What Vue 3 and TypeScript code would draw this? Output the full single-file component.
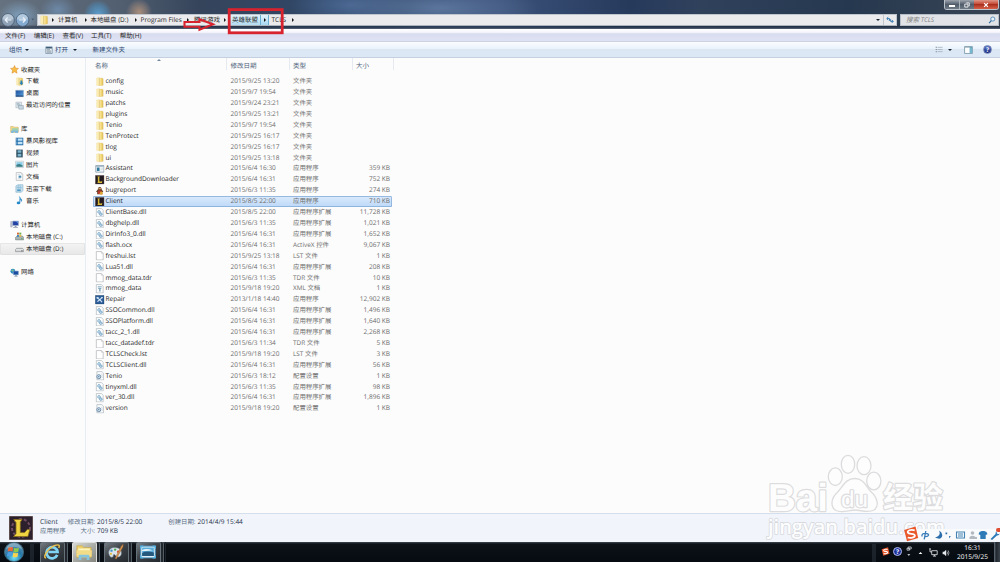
<script setup lang="ts">
interface FileRow { name: string; date: string; type: string; size: string; icon: string }
interface NavItem { label: string; icon: string; level: number; gap?: boolean; active?: boolean }

const APP = '应用程序'
const DLL = '应用程序扩展'
const DIR = '文件夹'
const CFG = '配置设置'

const raw: [string, string, string, string, string][] = [
  ['config', '2015/9/25 13:20', DIR, '', 'folder'],
  ['music', '2015/9/7 19:54', DIR, '', 'folder'],
  ['patchs', '2015/9/24 23:21', DIR, '', 'folder'],
  ['plugins', '2015/9/25 13:21', DIR, '', 'folder'],
  ['Tenio', '2015/9/7 19:54', DIR, '', 'folder'],
  ['TenProtect', '2015/9/25 16:17', DIR, '', 'folder'],
  ['tlog', '2015/9/25 16:17', DIR, '', 'folder'],
  ['ui', '2015/9/25 13:18', DIR, '', 'folder'],
  ['Assistant', '2015/6/4 16:30', APP, '359 KB', 'window'],
  ['BackgroundDownloader', '2015/6/4 16:31', APP, '752 KB', 'league'],
  ['bugreport', '2015/6/3 11:35', APP, '274 KB', 'bug'],
  ['Client', '2015/8/5 22:00', APP, '710 KB', 'league'],
  ['ClientBase.dll', '2015/8/5 22:00', DLL, '11,728 KB', 'dll'],
  ['dbghelp.dll', '2015/6/3 11:35', DLL, '1,021 KB', 'dll'],
  ['DirInfo3_0.dll', '2015/6/4 16:31', DLL, '1,652 KB', 'dll'],
  ['flash.ocx', '2015/6/4 16:31', 'ActiveX 控件', '9,067 KB', 'dll'],
  ['freshui.lst', '2015/9/25 13:18', 'LST 文件', '1 KB', 'page'],
  ['Lua51.dll', '2015/6/4 16:31', DLL, '208 KB', 'dll'],
  ['mmog_data.tdr', '2015/6/3 11:35', 'TDR 文件', '10 KB', 'page'],
  ['mmog_data', '2015/9/18 19:20', 'XML 文档', '1 KB', 'xml'],
  ['Repair', '2013/1/18 14:40', APP, '12,902 KB', 'repair'],
  ['SSOCommon.dll', '2015/6/4 16:31', DLL, '1,496 KB', 'dll'],
  ['SSOPlatform.dll', '2015/6/4 16:31', DLL, '1,640 KB', 'dll'],
  ['tacc_2_1.dll', '2015/6/4 16:31', DLL, '2,268 KB', 'dll'],
  ['tacc_datadef.tdr', '2015/6/3 11:34', 'TDR 文件', '5 KB', 'page'],
  ['TCLSCheck.lst', '2015/9/18 19:20', 'LST 文件', '3 KB', 'page'],
  ['TCLSClient.dll', '2015/6/4 16:31', DLL, '56 KB', 'dll'],
  ['Tenio', '2015/6/3 18:12', CFG, '1 KB', 'ini'],
  ['tinyxml.dll', '2015/6/3 11:35', DLL, '98 KB', 'dll'],
  ['ver_30.dll', '2015/6/4 16:31', DLL, '1,896 KB', 'dll'],
  ['version', '2015/9/18 19:20', CFG, '1 KB', 'ini'],
]
const files: FileRow[] = raw.map(([name, date, type, size, icon]) => ({ name, date, type, size, icon }))

const nav: NavItem[] = [
  { label: '收藏夹', icon: 'star', level: 0 },
  { label: '下载', icon: 'download', level: 1 },
  { label: '桌面', icon: 'desktop', level: 1 },
  { label: '最近访问的位置', icon: 'recent', level: 1 },
  { label: '库', icon: 'library', level: 0, gap: true },
  { label: '暴风影视库', icon: 'film', level: 1 },
  { label: '视频', icon: 'video', level: 1 },
  { label: '图片', icon: 'picture', level: 1 },
  { label: '文档', icon: 'doc', level: 1 },
  { label: '迅雷下载', icon: 'thunder', level: 1 },
  { label: '音乐', icon: 'music', level: 1 },
  { label: '计算机', icon: 'computer', level: 0, gap: true },
  { label: '本地磁盘 (C:)', icon: 'driveC', level: 1 },
  { label: '本地磁盘 (D:)', icon: 'driveD', level: 1, active: true },
  { label: '网络', icon: 'network', level: 0, gap: true },
]
const selected = 11
</script>

<template>
  <div class="screen">
    <svg class="defs" width="0" height="0">
      <defs>
        <linearGradient id="gFolder" x1="0" x2="1"><stop offset="0" stop-color="#fbeeb0" /><stop offset=".5" stop-color="#f3d979" /><stop offset="1" stop-color="#dfb955" /></linearGradient>
        <linearGradient id="gBlue" x1="0" y1="0" x2="1" y2="1"><stop offset="0" stop-color="#174c9c" /><stop offset="1" stop-color="#5ea4de" /></linearGradient>
        <radialGradient id="gOrb" cx=".5" cy=".8" r=".8"><stop offset="0" stop-color="#6fe0f5" /><stop offset=".5" stop-color="#2477a8" /><stop offset="1" stop-color="#6c93ab" /></radialGradient>
      </defs>
      <symbol id="folder" viewBox="0 0 10 10"><path d="M1.6 1 4.6.6v8.8l-3-.6z" fill="#fbedb5" stroke="#ecd998" stroke-width=".3" /><path d="M4.6 1.1h3.2l.8.9v6.8l-4 .6z" fill="url(#gFolder)" stroke="#dcbf6c" stroke-width=".3" /><path d="M4.6 1.4v7.6" stroke="#d0b056" stroke-width=".4" /></symbol>
      <symbol id="window" viewBox="0 0 10 10"><path d="M.8 1.6h8.6v7H.8z" fill="#f2f7fa" stroke="#8497a6" stroke-width=".8" /><path d="M1 1.7h8.2v1.2H1z" fill="#9bb1c1" /><path d="M2 3.8h2.8v3.6H2z" fill="#327a9c" /><path d="M5.8 4.4h2.6M5.8 6h2.6" stroke="#c5d0d6" stroke-width=".7" /></symbol>
      <symbol id="league" viewBox="0 0 10 10"><path d="M.5.5h9v9h-9z" fill="#211a20" stroke="#594b49" stroke-width=".6" /><path d="M2.3 1.6h3L4.6 2.3v4.2l.8.4h1.200L7.700 6 7.300 8.400H2.200l.8-.8V2.400z" fill="#d8b936" /></symbol>
      <symbol id="bug" viewBox="0 0 10 10"><path d="M3.3 3.2Q3.2 1 5 1t1.8 2.2L8.8 6 7.6 6.2v2.500H2.300V6.200L1 6z" fill="#624127" /><circle cx="5" cy="3" r="1.7" fill="#7c5131" /><path d="M3 4.8h4v3.5H3z" fill="#b4382b" /><circle cx="6.6" cy="7.500" r="1.600" fill="#dda633" /><path d="M3.700 2.700h2.800" stroke="#f0c394" stroke-width=".8" /></symbol>
      <symbol id="page" viewBox="0 0 10 10"><path d="M1.4.6H6.8L8.6 2.4v7H1.4z" fill="#fff" stroke="#a4a7aa" stroke-width=".65" /><path d="M6.8.6v1.8h1.8" fill="#e6e8e9" stroke="#a4a7aa" stroke-width=".4" /></symbol>
      <symbol id="dll" viewBox="0 0 10 10"><path d="M1.4.6H6.8L8.6 2.4v7H1.4z" fill="#fcfdfe" stroke="#a4adb4" stroke-width=".65" /><circle cx="4.2" cy="4.1" r="1.5" fill="#b9d5e8" stroke="#6c9cbd" stroke-width=".8" stroke-dasharray="1 .25" /><circle cx="6.1" cy="6.5" r="1.4" fill="#bcd7e9" stroke="#5a8eb3" stroke-width=".8" stroke-dasharray="1 .25" /></symbol>
      <symbol id="xml" viewBox="0 0 10 10"><path d="M1.4.6H6.8L8.6 2.4v7H1.4z" fill="#fafbfc" stroke="#a4adb4" stroke-width=".65" /><path d="M3 3h4M3.4 4.8h3.2" stroke="#5589a5" stroke-width=".8" /><path d="M4.2 5.2h1.8V8H4.2z" fill="#8fb0c0" /></symbol>
      <symbol id="repair" viewBox="0 0 10 10"><path d="M.5.5h9v9h-9z" fill="#2f5f9a" stroke="#173962" stroke-width=".5" /><path d="m2.400 3 2.600 2 2.400 2.400M7.400 2.600 5 5 2.500 7" stroke="#d7e9f7" stroke-width="1.100" fill="none" /><path d="M1.600 2.200h2.200v1.500H1.600zM6.600 2h1.600v1.500H6.600z" fill="#cfe2f2" /></symbol>
      <symbol id="ini" viewBox="0 0 10 10"><path d="M2 .6h5.2L9 2.4v7H2z" fill="#f8fafc" stroke="#a4adb4" stroke-width=".65" /><circle cx="4" cy="6" r="2.1" fill="#d8e8f3" stroke="#6a8ba9" stroke-width="1" /><circle cx="4" cy="6" r=".7" fill="#526f8c" /><path d="M6.5 3.4h1.4M7 5h1.2M7 6.6h1.2" stroke="#a8b7c3" stroke-width=".5" /></symbol>
      <symbol id="star" viewBox="0 0 10 10"><path d="m5 .6 1.3 2.9 3.1.3-2.3 2.1.7 3.2L5 7.5 2.2 9.1l.7-3.2L.6 3.8l3.1-.3z" fill="#f9bd45" stroke="#d98a26" stroke-width=".6" /></symbol>
      <symbol id="download" viewBox="0 0 10 10"><use href="#folder" /><path d="M6.1 4h2v2.3h1.3L7.1 9.3 4.8 6.3h1.3z" fill="#2781b8" /></symbol>
      <symbol id="desktop" viewBox="0 0 10 10"><path d="M.8 1.5h8.6v7H.8z" fill="url(#gBlue)" stroke="#87a5c5" stroke-width=".6" /><path d="M1 7.3h8.2v1.1H1z" fill="#1d3e68" /></symbol>
      <symbol id="recent" viewBox="0 0 10 10"><path d="M1 1.3h6.3v6.2H1z" fill="#e2e8ec" stroke="#91a2b1" stroke-width=".5" /><path d="M2 2.7h3M2 4h4M3 5.4h3" stroke="#7f9aac" stroke-width=".6" /><path d="M3.5 5h5.8v4.1H4.4z" fill="#c8d5df" stroke="#778fa4" stroke-width=".5" /></symbol>
      <symbol id="library" viewBox="0 0 10 10"><path d="M.7 1.6h3l.8.8h4.7v5.8H.7z" fill="#f2d881" stroke="#c9a858" stroke-width=".5" /><path d="M2.2 3.6h7v3.2h-7z" fill="#9ed0b4" /><path d="M1 6h8.4l-.7 3H5.8l-.5-1.2H4.1L3.6 9H1.4z" fill="#83bada" /></symbol>
      <symbol id="film" viewBox="0 0 10 10"><path d="M.8.8h8.4v8.4H.8z" fill="#236ca8" /><path d="M3 1.7h5.3v2.6H3zM3 5.4h5.3V8H3z" fill="#bfe2f6" /><path d="M1.7 1v8" stroke="#bedaee" stroke-width=".7" stroke-dasharray=".8 .7" /></symbol>
      <symbol id="video" viewBox="0 0 10 10"><path d="M1.4.7h7.2v8.6H1.4z" fill="#244454" /><path d="M3 1.5h4v2.8H3zM3 5.2h4v3.2H3z" fill="#7eb6d2" /><path d="M2.1 1v8M7.9 1v8" stroke="#b8c8cd" stroke-width=".5" stroke-dasharray=".7 .7" /></symbol>
      <symbol id="picture" viewBox="0 0 10 10"><path d="M.6 1.4h8.8v7H.6z" fill="#fff" stroke="#a2b1bc" stroke-width=".6" /><path d="M1.5 2.4h7v5h-7z" fill="#8acbe5" /><path d="M1.5 5.3 5 4.5l3.5 1.7v1.3h-7z" fill="#397d83" /></symbol>
      <symbol id="doc" viewBox="0 0 10 10"><use href="#page" /><path d="M2.8 2.5h2.8M2.8 7.6h4" stroke="#a1b6c5" stroke-width=".6" /><path d="M4 4h3v2.4H4z" fill="#498db2" /></symbol>
      <symbol id="thunder" viewBox="0 0 10 10"><path d="M1 2.2 3.4.8h5.4v6.6L7 9.2H1z" fill="#c9e1ef" stroke="#76a9c8" stroke-width=".6" /><path d="M3.6 1v5M5.8 1v5M2 4h6" stroke="#78b3d3" stroke-width=".6" /><path d="M2.4 6h4v2h-4z" fill="#5599c3" /></symbol>
      <symbol id="music" viewBox="0 0 10 10"><path d="M4.8.5C5.2 2.8 8.5 2.8 7 6c.2-1.8-1-2.1-1.6-2.2V7.4" fill="#3a9cd7" stroke="#2585c5" stroke-width=".8" /><ellipse cx="3.9" cy="7.7" rx="2" ry="1.5" fill="#278bcb" /></symbol>
      <symbol id="computer" viewBox="0 0 10 10"><path d="M.7 1.8h1.7v6H.7z" fill="#c1c6d5" stroke="#848b9e" stroke-width=".4" /><path d="M3 1.2h6.4v4.9H3z" fill="#2441a6" stroke="#a4b2c9" stroke-width=".7" /><path d="M6 1.5h3v2z" fill="#6f9ae1" /><path d="M5.2 6.5h2v1.4h1.6v.8H3.5v-.8h1.7z" fill="#8e99aa" /></symbol>
      <symbol id="driveC" viewBox="0 0 10 10"><path d="M.6 6 2.2 4.5h6.1L9.6 6v2.8h-9z" fill="#a8b3b4" stroke="#606d70" stroke-width=".5" /><path d="M2.2.7h2.2v2.2H2.2z" fill="#d96a36" /><path d="M4.8.7H7v2.2H4.8z" fill="#6cad4a" /><path d="M2.2 3.3h2.2v2H2.2z" fill="#3a88bf" /><path d="M4.8 3.3H7v2H4.8z" fill="#e5bd48" /><path d="M6.6 7.5h2" stroke="#4ca65a" stroke-width=".8" /></symbol>
      <symbol id="driveD" viewBox="0 0 10 10"><path d="M.6 6.2 1.8 4.8h6.5l1.3 1.4v2.3h-9z" fill="#d5d8d9" stroke="#767b7e" stroke-width=".6" /><path d="M.9 6.3h8.4" stroke="#f9f9f9" stroke-width=".5" /><path d="M6.8 7.6h1.8" stroke="#46545c" stroke-width=".8" /></symbol>
      <symbol id="network" viewBox="0 0 10 10"><circle cx="3.2" cy="3.6" r="2.7" fill="#348dc1" /><path d="M1.2 3Q3.2.9 4.2 2L3.5 4z" fill="#72c288" /><path d="M3.8 3.4h5.5v4.2H3.8z" fill="#1a4ca0" stroke="#86a7c7" stroke-width=".6" /><path d="M6 7.8h1.3v1h1.2v.6H4.8v-.6H6z" fill="#71869b" /></symbol>
      <symbol id="sogou" viewBox="0 0 16 16"><path d="M1.500 3.500 13.200 1l1.600 11.500L3.400 15z" fill="#e9582a" /><path d="M12 4.600C8 3 4.400 4.400 5 6.400s6.600.8 6.700 3.200S7 12.400 4.400 11.200" fill="none" stroke="#fff" stroke-width="1.800" /></symbol>
    </svg>

    <header class="glass">
      <div class="controls">
        <span class="ctl"><i class="min"></i></span>
        <span class="ctl mid"><svg viewBox="0 0 8 8"><path d="M3 1.2h4v4H5.8M1 2.8h4.2v4H1z" fill="none" stroke="#fff" stroke-width="1.1" /></svg></span>
        <span class="ctl close"><svg viewBox="0 0 8 8"><path d="m1.500 1.500 5 5m0-5-5 5" stroke="#fff" stroke-width="1.700" /></svg></span>
      </div>
      <div class="address-row">
        <div class="navbtns">
          <svg width="36" height="16" viewBox="0 0 36 16"><g stroke="#40516a" stroke-width=".7"><circle cx="8" cy="8" r="6.400" fill="#8fa1b5" /><circle cx="22.500" cy="8" r="6.400" fill="#86abd0" /></g><path d="M2.500 7.400a5.500 5.500 0 0 1 11 0zM17 7.400a5.500 5.500 0 0 1 11 0z" fill="#c6d5e3" opacity=".7" /><path d="M11.400 8H5.200m2.500-2.500L5.200 8l2.500 2.500M19.200 8h6.200m-2.500-2.500L25.400 8l-2.500 2.500" fill="none" stroke="#e9f2fb" stroke-width="1.200" /><path d="m31.400 6.600 2.600.1-1.300 1.700z" fill="#42536b" /></svg>
        </div>
        <div class="address">
          <svg class="a-folder"><use href="#folder" /></svg>
          <i class="tri t1"></i><span class="crumb c1">计算机</span>
          <i class="tri"></i><span class="crumb c2">本地磁盘 (D:)</span>
          <i class="tri"></i><span class="crumb c3">Program Files</span>
          <i class="tri"></i><span class="crumb c4">腾讯游戏</span>
          <i class="tri t5"></i><span class="crumb hot c5">英雄联盟</span><span class="hot-arrow"><i class="tri"></i></span>
          <span class="crumb c6">TCLS</span><i class="tri t7"></i>
          <span class="grow"></span>
          <i class="down"></i>
          <span class="refresh"><svg viewBox="0 0 10 10"><path d="M4.400 6V3.200H1.400M2.800 1.400.9 3.200l1.900 1.800M5.800 4v2.800h2.800M7.300 5l1.800 1.800-1.800 1.800" fill="none" stroke="#3278b0" stroke-width="1.200" /></svg></span>
        </div>
        <div class="search"><span>搜索 TCLS</span><svg viewBox="0 0 10 10"><circle cx="6" cy="3.800" r="2.600" fill="#e6f3fa" stroke="#427daf" stroke-width="1" /><path d="M4.100 5.800 1.400 8.800" stroke="#356c9c" stroke-width="1.500" /></svg></div>
      </div>
      <svg class="marks" viewBox="0 0 110 28"><rect x="49.200" y="9.600" width="53" height="23.200" fill="none" stroke="#d8232f" stroke-width="2.800" /><path d="M4.500 22H19.500V19.200L33 24.200 19.500 29.700V26.800H4.500z" fill="none" stroke="#d8232f" stroke-width="2.100" /></svg>
    </header>

    <nav class="menubar"><span>文件(F)</span><span>编辑(E)</span><span>查看(V)</span><span>工具(T)</span><span>帮助(H)</span></nav>

    <div class="toolbar">
      <span class="tb org">组织</span><i class="down d1"></i>
      <svg class="open-ic" viewBox="0 0 10 10"><path d="M1 1h8v8.300H1z" fill="#eef2f5" stroke="#607a93" stroke-width=".8" /><path d="M1.400 1.300h7.200v1.800H1.400z" fill="#35566f" /><path d="M2.200 4.600h4M2.200 6.200h5.400M2.200 7.700h5.400" stroke="#5b7486" stroke-width=".8" /></svg>
      <span class="tb open">打开</span><i class="down d2"></i>
      <span class="tb">新建文件夹</span>
      <span class="grow"></span>
      <svg class="view-ic" viewBox="0 0 10 8"><path d="M.8 1.300h2M.8 4h2M.8 6.700h2" stroke="#8494a6" stroke-width="1.300" /><path d="M3.600 1.300H9.500M3.600 4H9.500M3.600 6.700H9.500" stroke="#a4b0bd" stroke-width="1" /></svg>
      <i class="down d3"></i>
      <svg class="pane-ic" viewBox="0 0 10 9"><path d="M.6.7h8.800v7.700H.6z" fill="#fff" stroke="#61879a" stroke-width=".8" /><path d="M6.200 1h3v7h-3z" fill="#74b7ce" /><path d="M1 1.300h8" stroke="#76919f" stroke-width=".8" /></svg>
      <span class="help">?</span>
    </div>

    <main class="content">
      <aside class="sidebar">
        <div v-for="n in nav" :key="n.label" class="nav-item" :class="{ sub: n.level === 1, gap: n.gap, active: n.active }">
          <svg class="nav-ic"><use :href="'#' + n.icon" /></svg><span>{{ n.label }}</span>
        </div>
      </aside>
      <section class="list">
        <div class="cols">
          <span class="h name">名称</span><span class="h date">修改日期</span><span class="h type">类型</span><span class="h size">大小</span>
          <i class="sort"></i>
        </div>
        <div v-for="(f, i) in files" :key="i" class="row" :class="{ selected: i === selected }">
          <svg class="file-ic"><use :href="'#' + f.icon" /></svg>
          <span class="name">{{ f.name }}</span><span class="date">{{ f.date }}</span><span class="type">{{ f.type }}</span><span class="size">{{ f.size }}</span>
        </div>
      </section>
    </main>

    <footer class="details">
      <svg class="big-l" viewBox="0 0 24 24"><path d="M.5.5h23v23H.5z" fill="#2b202b" stroke="#5e4e50" /><circle cx="12" cy="12" r="9" fill="none" stroke="#704b63" stroke-width="2" stroke-dasharray="3 2" /><path d="M4.700 3.500h8.400L11.300 6v10.400l4.200.2 3.100-3.400 2.200.6-1.900 6.700H4.500L7 17.800V6.400z" fill="#f0d442" stroke="#856b1c" stroke-width=".8" /></svg>
      <div class="d-grid">
        <span class="d-name">Client</span><span class="lab">修改日期:</span><span>2015/8/5 22:00</span><span class="lab cr">创建日期:</span><span>2014/4/9 15:44</span>
        <span class="lab left">应用程序</span><span class="lab">大小:</span><span>709 KB</span>
      </div>
    </footer>

    <div class="taskbar">
      <svg class="orb" viewBox="0 0 22 22"><circle cx="11" cy="11" r="9.600" fill="url(#gOrb)" stroke="#426779" stroke-width=".8" /><path d="M5.300 6.600q2.400-1.200 4.900-.2l-.6 4q-2.400-1-5 .2z" fill="#e8683b" /><path d="M11 6.800q2.500 1.100 5-.1l-.7 4.100q-2.500 1.200-4.900 0z" fill="#8dc84d" /><path d="M4.500 11.400q2.500-1.200 5-.2l-.6 4q-2.400-1-5 .2z" fill="#4c9de0" /><path d="M10.300 11.600q2.500 1.200 4.900.1l-.7 4q-2.400 1.200-4.800.1z" fill="#fbd44e" /><path d="M3 8a8.500 8.500 0 0 1 16 0q-8-4-16 0" fill="#fff" opacity=".25" /></svg>
      <i class="grip"></i>
      <span class="task"><svg viewBox="0 0 20 20"><path d="M15.800 13.200A6.200 6.200 0 1 1 16.200 10H6" fill="none" stroke="#7fd4f5" stroke-width="3" /><path d="M3.500 16.500C-1 17 5 6 12.500 3c5-2 6.500-.5 5 2.500" fill="none" stroke="#edc44c" stroke-width="1.600" /></svg></span>
      <span class="task on"><svg viewBox="0 0 20 20"><path d="M2 3h6l1.500 2H18v11H2z" fill="#ebcd69" stroke="#c6a445" stroke-width=".6" /><path d="M3.500 6h13v4h-13z" fill="#faf4bd" /><path d="M1.600 8h17v7H1.600z" fill="#f3dc87" /><path d="M4 19v-4.500q0-1.500 1.500-1.500h9q1.500 0 1.500 1.500V19h-3v-3H7v3z" fill="#87c5de" /></svg></span>
      <span class="task"><svg viewBox="0 0 20 20"><path d="M9 5C3 4.500.7 9.500 2.500 13.500c1.500 3.300 4.800 2.700 4.500.8-.2-1.700 1.300-2 2.400-.5C11.600 17 16 15.500 16 11S12.800 5.300 9 5" fill="#dbe4ea" stroke="#6e7d89" stroke-width=".6" /><circle cx="5" cy="8.500" r="1.300" fill="#4196cf" /><circle cx="9" cy="7.300" r="1.300" fill="#4cae5b" /><circle cx="12.400" cy="9.700" r="1.300" fill="#d2553c" /><circle cx="4.400" cy="12" r="1.200" fill="#e4bb3b" /><path d="m9 17 6.800-13.500L18 1l-.2 3.300L10.200 18z" fill="#d39450" stroke="#8e562a" stroke-width=".4" /></svg></span>
      <span class="task"><svg viewBox="0 0 20 20"><path d="M2 3.500h16v13H2z" fill="#e5f1f7" stroke="#4c9dcd" /><path d="M3.500 5h13v9.500h-13z" fill="#5aaedb" /><path d="M3.500 11Q8 8 16.500 10.500v4h-13z" fill="#24587c" /><path d="M3.500 7.900Q8 5.500 15 8.100q-5 1.300-11.500.7z" fill="#e6f4fa" /><path d="M2 13.500v3h3M18 13.500v3h-3M2 6.500v-3h3M18 6.500v-3h-3" fill="none" stroke="#54b4e4" stroke-width="1.400" /></svg></span>
      <i class="edge"></i>
      <span class="grow"></span>
      <i class="grip g2"></i>
      <div class="tray">
        <svg class="s1"><use href="#sogou" /></svg>
        <span class="help tq">?</span>
        <svg class="s2" viewBox="0 0 6 12"><path d="M2.200 1h3v2h-3zM1 2.200h2.500v2H1z" fill="none" stroke="#dfe5e8" stroke-width=".7" /><path d="M1.300 8.200h3L2.800 9.800z" fill="#fff" /></svg>
        <svg class="s3" viewBox="0 0 6 4"><path d="m3 .7 2.200 2.600H.8z" fill="#fff" /></svg>
        <svg class="s4" viewBox="0 0 10 10"><path d="M3 3h6.100v4.400H3zM4.400 9h3.400M6 7.400V9M1.100.8v3.500H3M.2 1h1.900" fill="none" stroke="#e8eaec" stroke-width=".9" /></svg>
        <svg class="s5" viewBox="0 0 10 10"><path d="M.8 3.400h1.800L5.200.9v8.200L2.600 6.600H.8z" fill="#e7eaec" /><path d="M6.300 3.200q1.100 1.700 0 3.600M7.700 1.800q2 3 0 6.400" fill="none" stroke="#dfe3e5" stroke-width=".8" /></svg>
      </div>
      <div class="clock"><span>16:31</span><span>2015/9/25</span></div>
      <i class="show"></i>
    </div>

    <svg class="watermark" viewBox="0 0 190 92" width="190" height="92">
      <g class="wm">
        <text x="8" y="58.500" font-size="39" font-weight="700" textLength="60" lengthAdjust="spacingAndGlyphs">Bai</text>
        <ellipse cx="75.300" cy="24.700" rx="7" ry="8.800" /><ellipse cx="88" cy="12.300" rx="6.700" ry="9" /><ellipse cx="104" cy="13.700" rx="7" ry="9" /><ellipse cx="113.800" cy="29" rx="7.100" ry="8.800" />
        <path d="M95 26.500c-10.500 0-12 9-18 14.200C71 46 70 55 76 58.500c6 3 13-.5 19-.5s13 3.500 19 0c5.500-3.500 3.500-12.500-2.500-17.800C106 35 104 26.500 95 26.500z" />
        <text x="81" y="55" font-size="23" textLength="27" lengthAdjust="spacingAndGlyphs" class="du">du</text>
        <text x="123" y="56" font-size="30" font-weight="700" textLength="60" lengthAdjust="spacingAndGlyphs" class="cj">经验</text>
        <text x="8" y="81.500" font-size="20.500" font-weight="600" textLength="177" lengthAdjust="spacingAndGlyphs" class="url">jingyan.baidu.com</text>
      </g>
    </svg>

    <div class="ime">
      <svg class="ime-s"><use href="#sogou" /></svg>
      <svg class="ime-i" viewBox="0 0 82 10"><g fill="none" stroke="#397dba" stroke-width="1.300"><path d="M1 6.500Q.5 3.300 4 3.300t3.600 1.800Q7 7 3.400 6.600M4.800 1 3.200 9.300" /></g><path d="M18 .8q2.600 5-4 6.800 6.500 3 7.300-2Q21 2 18 .8" fill="#2d6fac" /><path d="M24.500 2.500h1.700v1.700h-1.700zM28 6h1.700L28.500 8.500z" fill="#2d6fac" /><path d="M35.500 2h8v6h-8zM37 4h5M37 6h5" fill="none" stroke="#4283b4" stroke-width="1.100" /><circle cx="51.500" cy="3" r="1.800" fill="#b3b9c0" /><path d="M48.500 9V7q3-2.500 6 0h1.500v2z" fill="#b3b9c0" /><path d="m58.500 2 2.200-1h2.600l2.200 1 1 2.200-1.800.8v4h-5.400V5l-1.800-.8z" fill="#2f7bb8" /><path d="m69.500 9 5-5q-.4-2 1.500-2.800L75.700 3l1.200 1.200 1.800-.5q-.7 2-2.700 1.700L71 10z" fill="#2f7bb8" /></svg>
      <i class="ime-dot"></i>
    </div>
  </div>
</template>

<style>
html, body { margin: 0; overflow: hidden; }
</style>

<style scoped>
.screen { position: relative; width: 1000px; height: 562px; display: flex; flex-direction: column; overflow: hidden; background: #fcfcfc; color: #222; font: 6.5px/11px "Open Sans", "Noto Sans CJK SC", sans-serif; text-rendering: geometricPrecision; white-space: nowrap; }
.screen span { flex: none; }
.screen svg, .screen i { flex: none; display: block; }
.screen .grow { flex: 1; }
.defs { position: absolute; }
.glass { position: relative; height: 30px; flex: none; box-sizing: border-box; border-bottom: 1px solid #fff; background: linear-gradient(transparent 25px, #1b2638aa 27px, #5a687c 29px), radial-gradient(circle at 98px 14px, #5b9cca, #4e8fbf88 9px, transparent 14px), radial-gradient(circle at 139px 12px, #a88c79, #94837a88 8px, transparent 13px), radial-gradient(ellipse 22px 16px at 20px 16px, #7fa0bd, transparent), radial-gradient(ellipse 18px 14px at 58px 10px, #6d89a8, transparent), radial-gradient(ellipse 100px 22px at 440px 8px, #5b759c, transparent), radial-gradient(ellipse 60px 20px at 350px 5px, #4b6893, transparent), linear-gradient(90deg, #66727f 0, #525f70 12%, #35445b 20%, #304767 32%, #3c527a 50%, #263a5c 63%, #30415c 70%, #26384f 85%, #394554 100%); }
.controls { position: absolute; right: 1px; top: 0; display: flex; height: 9px; border: 1px solid #bac2cb; border-top: 0; border-radius: 0 0 3px 3px; overflow: hidden; }
.ctl { width: 14px; display: flex; align-items: center; justify-content: center; background: linear-gradient(#9ca3ac, #515c6b 50%, #707b88); }
.ctl.mid { border-left: 1px solid #aab2ba; }
.ctl svg { width: 6px; height: 6px; }
.ctl.close { width: 24px; background: linear-gradient(#de9586, #c54835 45%, #a9301e 50%, #d8614a); }
.min { width: 6px; height: 2px; background: #fff; margin-top: 2px; }
.address-row { display: flex; padding-top: 14px; height: 12px; }
.navbtns { width: 37px; margin-top: -2px; }
.address { width: 860px; box-sizing: border-box; height: 11.500px; display: flex; align-items: center; background: #ebebee; border: 1px solid #c0c6ce; border-bottom-color: #abb3bd; color: #242424; }
.address span { line-height: 10px; }
.a-folder { width: 10px; height: 10px; margin-left: 1px; }
.tri { width: 0; height: 0; border-left: 2.400px solid #161616; border-top: 2px solid transparent; border-bottom: 2px solid transparent; }
.t1 { margin-left: 2.500px; }
.crumb { font-size: 6.500px; }
.c1 { width: 26.500px; margin-left: 4.500px; }
.c2 { width: 44px; margin-left: 4px; }
.c3 { width: 46.500px; margin-left: 4px; }
.c4 { width: 29px; margin-left: 5px; }
.t5 { margin-left: 1px; }
.c5 { margin-left: 3px; padding-left: 2px; width: 27.500px; height: 10px; background: linear-gradient(#e1f2fb, #b3dcf2); border: solid #69b0d5; border-width: 0 1px 0 1px; }
.hot-arrow { height: 10px; width: 8px; display: flex; align-items: center; padding-left: 3px; box-sizing: border-box; background: linear-gradient(#e1f2fb, #a8d8f2); border-right: 1px solid #69b0d5; }
.c6 { margin-left: 3px; width: 20px; }
.down { width: 0; height: 0; border-top: 2.600px solid #1b2635; border-left: 2.200px solid transparent; border-right: 2.200px solid transparent; }
.refresh { width: 12px; height: 10px; border-left: 1px solid #c1c7ce; margin-left: 3px; display: flex; align-items: center; justify-content: center; }
.refresh svg { width: 8px; height: 8px; }
.search { margin-left: 3px; width: 99px; height: 11.500px; box-sizing: border-box; border: 1px solid #b6bec7; background: #e1e3e6; display: flex; justify-content: space-between; align-items: center; padding: 0 2px 0 5px; color: #858585; font-style: italic; }
.search svg { width: 8px; height: 8px; }
.marks { position: absolute; left: 180px; top: 0; width: 110px; height: 28px; overflow: visible; z-index: 3; }
.menubar { height: 12px; flex: none; display: flex; box-sizing: border-box; padding-left: 5px; border-bottom: 1px solid #cdd2e2; background: linear-gradient(#fdfdff 0, #f0f1fa 28%, #d8dcef 33%, #dfe3f4 100%); }
.menubar span { width: 28.700px; line-height: 12px; }
.toolbar { height: 16px; flex: none; display: flex; align-items: center; box-sizing: border-box; border-bottom: 1px solid #c4d0df; background: linear-gradient(#fafdff 0, #e9f2fc 45%, #dce7f4 50%, #dde8f6 100%); color: #25406b; padding-left: 9px; }
.org { width: 16px; }
.open-ic { width: 8px; height: 8px; margin-left: 16px; }
.open { margin-left: 2px; width: 17px; }
.d2 { margin-right: 16px; margin-left: .5px; }
.view-ic { width: 8px; height: 7px; }
.d3 { margin-left: 5px; }
.pane-ic { width: 9px; height: 8px; margin-left: 12px; }
.help { width: 7px; height: 7px; border: .5px solid #7484b3; border-radius: 50%; background: linear-gradient(#5e79ca, #152980); color: #fff; font-weight: 700; font-size: 6.500px; line-height: 7px; text-align: center; }
.toolbar .help { margin: 0 8px 0 10px; }
.content { height: 455px; flex: none; display: flex; }
.sidebar { width: 86px; box-sizing: border-box; padding-top: 5.500px; border-right: 1px solid #e8edf3; color: #1d1d1d; }
.nav-item { height: 11.950px; line-height: 11.950px; display: flex; align-items: center; padding-left: 10px; box-sizing: border-box; font-size: 6.400px; }
.nav-item.sub { padding-left: 15px; }
.nav-item.gap { margin-top: 11.950px; }
.nav-item.active { background: linear-gradient(#f4f4f4, #e7e7e7); box-shadow: inset 0 0 0 .5px #d9d9d9; border-radius: 2px; }
.nav-ic { width: 9px; height: 9px; margin-right: 2px; }
.list { width: 308px; padding-left: 7px; }
.cols { position: relative; height: 18.200px; display: flex; color: #4c607a; }
.cols .h { line-height: 15px; height: 12px; box-sizing: border-box; border-right: 1px solid #e6eaf0; }
.cols .h.name { width: 134px; padding-left: 2px; }
.cols .h.date { width: 63px; padding-left: 3.500px; }
.cols .h.type { width: 63px; padding-left: 3px; }
.cols .h.size { width: 41px; padding-left: 3px; text-align: left; }
.sort { position: absolute; left: 64px; top: 1px; border-bottom: 2px solid #71879e; border-left: 2.500px solid transparent; border-right: 2.500px solid transparent; }
.row { height: 10.920px; line-height: 10.920px; display: flex; align-items: center; width: 299px; border-radius: 1.500px; color: #6d6d6d; }
.row .name { width: 125px; color: #1e1e1e; }
.row .date { width: 62.500px; }
.row .type { width: 52px; font-size: 6.400px; }
.row .size { width: 45px; text-align: right; }
.row.selected { background: linear-gradient(#dcebfc, #bcd8f8); box-shadow: inset 0 0 0 .7px #7fa9d8; }
.file-ic { width: 9.500px; height: 9.500px; margin: 0 1px 0 2px; }
.details { height: 29px; flex: none; box-sizing: border-box; display: flex; background: #f1f5fb; border-top: 1px solid #d5dfeb; padding: 1.500px 0 0 9px; }
.big-l { width: 24px; height: 24px; }
.d-grid { display: grid; grid-template-columns: 25px 28px 69px 27.500px 50px; grid-auto-rows: 9.800px; column-gap: 2px; margin: 1px 0 0 7px; line-height: 9.800px; color: #1f3048; }
.lab { text-align: right; color: #596b82; font-size: 6.400px; }
.lab.left { text-align: left; }
.d-name { font-size: 6.700px; }
.taskbar { height: 20px; flex: none; display: flex; align-items: stretch; background: linear-gradient(#414950 0, #0c1118 2px, #060b12 100%); overflow: hidden; }
.orb { width: 22px; height: 22px; margin: -1px 0 0 3px; }
.grip { width: 4px; margin: 2px 0 0 5px; background: radial-gradient(circle, #48515a .5px, transparent .8px) 0 0 / 2px 2px; }
.task { width: 25px; height: 20px; margin-left: 5.500px; border: solid #66717a; border-width: 1px 1px 0; box-sizing: border-box; display: flex; justify-content: center; background: linear-gradient(145deg, #737b82, #3b4147 45%, #24292e); border-radius: 2px 2px 0 0; box-shadow: 2px 0 #20262b, 3px 0 #535d64; }
.task + .task { margin-left: 7px; }
.task.on { background: linear-gradient(145deg, #d8dad7, #a8aaa6 50%, #85877f); border-color: #dedfdc; }
.task svg { width: 18px; height: 18px; }
.edge { width: 1px; margin-left: 4px; background: #1d242b; }
.g2 { margin-right: 5px; }
.tray { display: flex; align-items: center; height: 19px; width: 74px; }
.s1 { width: 9px; height: 9px; }
.tq { margin-left: 3px; border-color: #b2bdea; background: #2034a0; }
.s2 { width: 6px; height: 12px; margin-left: 4px; }
.s3 { width: 5px; height: 4px; margin: 3px 0 0 6px; }
.s4 { width: 9px; height: 9px; margin: 2px 0 0 6px; }
.s5 { width: 8px; height: 8px; margin: 2px 0 0 4px; }
.clock { width: 35px; display: flex; flex-direction: column; align-items: center; color: #fff; padding-top: .5px; }
.clock span { line-height: 9.300px; }
.show { width: 6px; margin-left: 4px; background: linear-gradient(90deg, #67717b, #20272f 35%, #3a434c); }
.watermark { position: absolute; left: 760px; top: 452px; overflow: visible; }
.wm { fill: #fdfdfd; stroke: #dcdcde; stroke-width: 1.300; font-family: "Liberation Sans", "Noto Sans CJK SC", sans-serif; }
.wm text { paint-order: stroke fill; stroke-width: 2.400; stroke-linejoin: round; }
.wm .du { stroke-width: 2.400; }
.wm .cj { font-family: "Noto Sans CJK SC", sans-serif; }
.wm .url { font-family: "Open Sans", sans-serif; stroke-width: 1.600; stroke: #d7d9de; }
.ime { position: absolute; left: 915px; top: 529px; width: 85px; height: 11px; background: #f8fafc; }
.ime-s { position: absolute; left: -12px; top: -3px; width: 16px; height: 16px; }
.ime-s, .s1 { transform: rotate(-5deg); }
.ime-i { position: absolute; left: 6px; top: 1px; width: 82px; height: 10px; }
.ime-dot { position: absolute; right: 0; top: -1px; width: 4px; height: 4px; background: #df4d33; border-radius: 2px 0 0 2px; }
</style>
